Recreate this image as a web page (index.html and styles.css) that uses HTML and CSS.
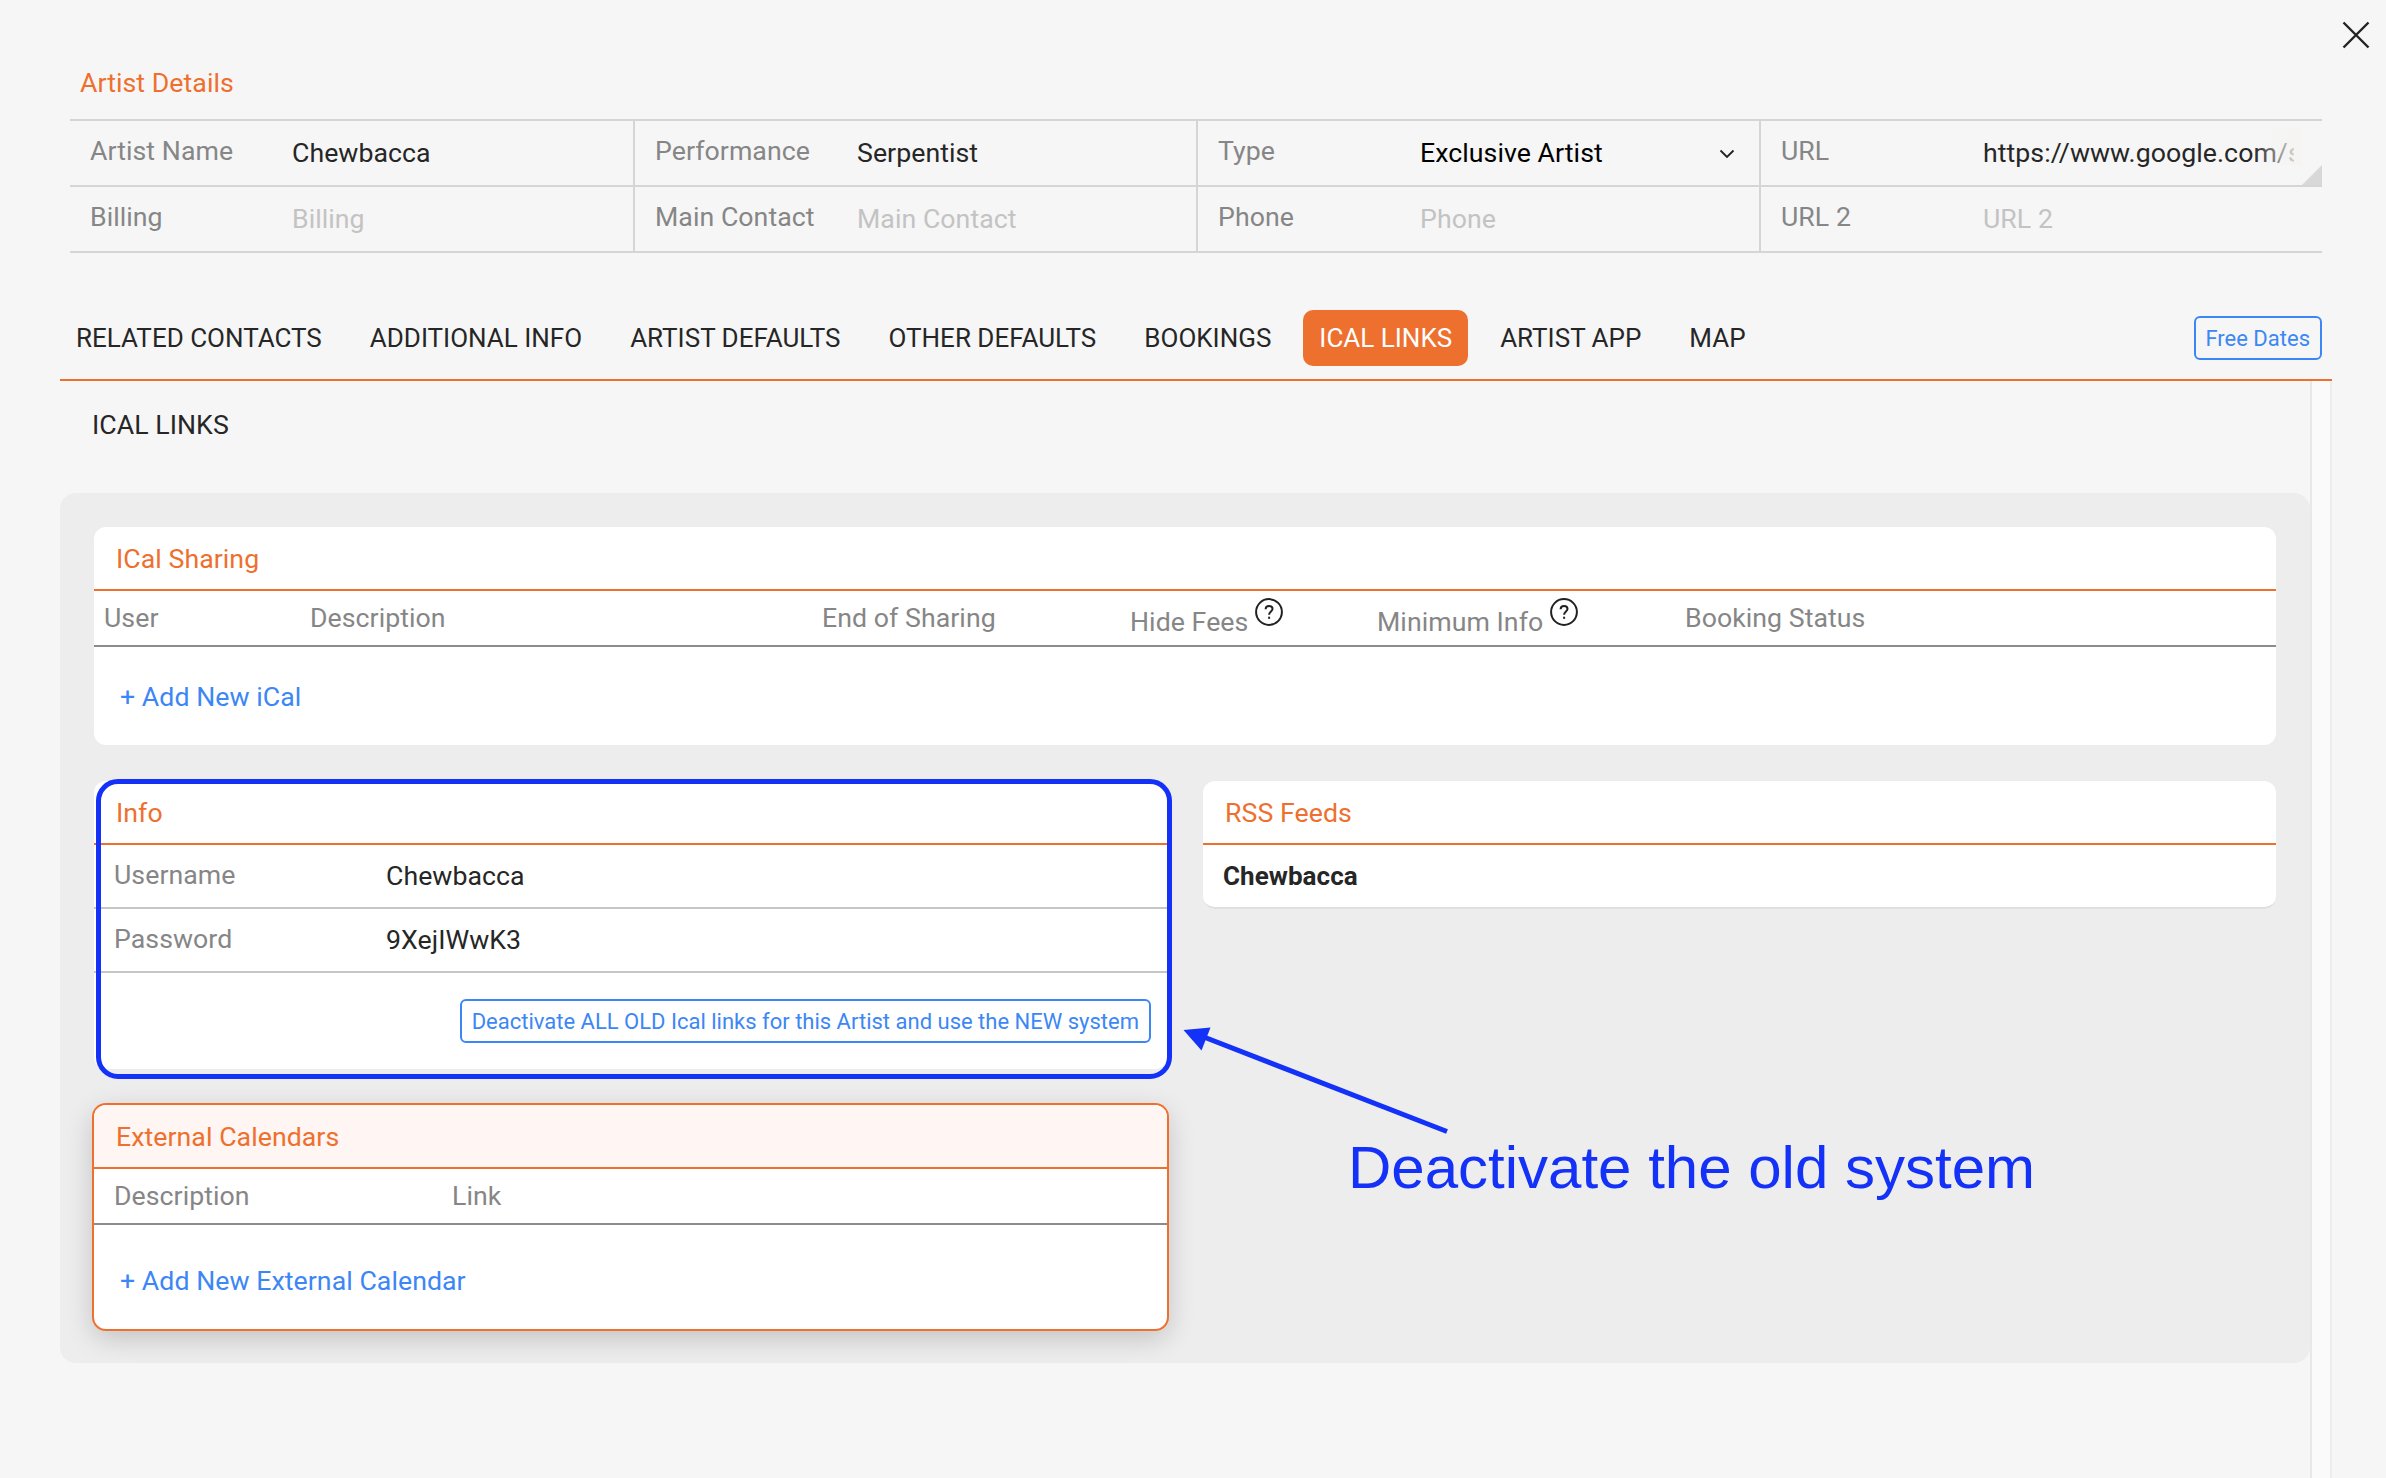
FILE: index.html
```html
<!DOCTYPE html>
<html lang="en">
<head>
    <meta charset="UTF-8">
    <meta name="viewport" content="width=device-width, initial-scale=1.0">
    <title>Artist Details</title>
    <link rel="stylesheet" href="styles.css">
</head>
<body>
    <div class="modal">
        <svg class="close" viewBox="0 0 28 28"><path d="M1.5 1.5 L26.5 26.5 M26.5 1.5 L1.5 26.5"/></svg>

        <h1 class="page-title">Artist Details</h1>
        <div class="details">
            <div class="field"><label>Artist Name</label><span class="value">Chewbacca</span></div>
            <div class="field"><label>Performance</label><span class="value">Serpentist</span></div>
            <div class="field">
                <label>Type</label><span class="value select">Exclusive Artist</span>
                <svg class="chevron" viewBox="0 0 16 10"><path d="M1.5 1.5 L8 8 L14.5 1.5"/></svg>
            </div>
            <div class="field url-field"><label>URL</label><span class="value url">https://www.google.com/s</span><span class="fade"></span></div>
            <div class="field"><label>Billing</label><span class="value placeholder">Billing</span></div>
            <div class="field"><label>Main Contact</label><span class="value placeholder">Main Contact</span></div>
            <div class="field"><label>Phone</label><span class="value placeholder">Phone</span></div>
            <div class="field"><label>URL 2</label><span class="value placeholder">URL 2</span></div>
        </div>

        <div class="tabs">
            <a class="tab">RELATED CONTACTS</a>
            <a class="tab">ADDITIONAL INFO</a>
            <a class="tab">ARTIST DEFAULTS</a>
            <a class="tab">OTHER DEFAULTS</a>
            <a class="tab">BOOKINGS</a>
            <a class="tab active">ICAL LINKS</a>
            <a class="tab">ARTIST APP</a>
            <a class="tab">MAP</a>
            <button class="btn free-dates">Free Dates</button>
        </div>

        <div class="content">
            <div class="content-main">
                <h2 class="section-title">ICAL LINKS</h2>
                <div class="panel">
                    <div class="card">
                        <div class="card-title">ICal Sharing</div>
                        <div class="thead sharing-head">
                            <span>User</span>
                            <span>Description</span>
                            <span>End of Sharing</span>
                            <span class="with-help">Hide Fees
                                <svg class="help" viewBox="0 0 28 28"><circle cx="14" cy="14" r="12.9"/><path d="M10.6 11.3 C10.6 9 12 7.9 14.1 7.9 C16.2 7.9 17.5 9.1 17.5 10.9 C17.5 13.3 14.1 13.7 14.1 16.7"/><path d="M14.1 18.7 V20.8"/></svg>
                            </span>
                            <span class="with-help">Minimum Info
                                <svg class="help" viewBox="0 0 28 28"><circle cx="14" cy="14" r="12.9"/><path d="M10.6 11.3 C10.6 9 12 7.9 14.1 7.9 C16.2 7.9 17.5 9.1 17.5 10.9 C17.5 13.3 14.1 13.7 14.1 16.7"/><path d="M14.1 18.7 V20.8"/></svg>
                            </span>
                            <span>Booking Status</span>
                        </div>
                        <a class="add-link">+ Add New iCal</a>
                    </div>

                    <div class="columns">
                        <div class="column">
                            <div class="card info-card">
                                <div class="card-title">Info</div>
                                <div class="row"><label>Username</label><span>Chewbacca</span></div>
                                <div class="row"><label>Password</label><span>9XejIWwK3</span></div>
                                <div class="actions">
                                    <button class="btn">Deactivate ALL OLD Ical links for this Artist and use the NEW system</button>
                                </div>
                                <div class="highlight"></div>
                            </div>
                            <div class="card selected">
                                <div class="card-title">External Calendars</div>
                                <div class="thead external-head">
                                    <span>Description</span>
                                    <span>Link</span>
                                </div>
                                <a class="add-link add-external">+ Add New External Calendar</a>
                            </div>
                        </div>
                        <div class="column">
                            <div class="card rss-card">
                                <div class="card-title">RSS Feeds</div>
                                <div class="feed">Chewbacca</div>
                            </div>
                        </div>
                    </div>

                    <!-- callout over the panel -->
                    <svg class="arrow" viewBox="0 0 280 120">
                        <path class="arrow-line" d="M20 12.5 L267 108.5"/>
                        <path class="arrow-head" d="M3.5 7 L30.5 4.5 L21.5 27.5 Z"/>
                    </svg>
                    <div class="callout">Deactivate the old system</div>
                </div>
            </div>
            <div class="scroll-track"></div>
        </div>
    </div>
</body>
</html>
```
FILE: styles.css
```css
* {
    box-sizing: border-box;
}
body, html {
    height: 100%;
    margin: 0;
    overflow: hidden;
    background-color: #f6f6f6;
    font-family: Roboto, sans-serif;
    font-size: 26.7px;
    letter-spacing: 0.05px;
    color: #262626;
}
.modal {
    position: relative;
    display: flex;
    flex-direction: column;
    height: 100%;
    padding: 63px 54px 0 60px;
}
.close {
    position: absolute;
    top: 21px;
    right: 16px;
    width: 28px;
    height: 28px;
    fill: none;
    stroke: #222;
    stroke-width: 2.4;
}
.page-title {
    margin: 0 0 16px 20px;
    font-size: 26.7px;
    font-weight: 400;
    line-height: 40px;
    color: #ee702e;
}

/* artist fields */
.details {
    display: grid;
    grid-template-columns: repeat(4, 563px);
    width: 2252px;
    margin-left: 10px;
    border-top: 2px solid #d5d5d5;
}
.field {
    position: relative;
    display: flex;
    height: 66px;
    line-height: 64px;
    padding-left: 20px;
    border-bottom: 2px solid #d5d5d5;
    white-space: nowrap;
}
.field::before {
    content: "";
    position: absolute;
    left: 0;
    top: 0;
    width: 2px;
    height: 64px;
    background-color: #d5d5d5;
}
.field:nth-child(4n+1)::before {
    display: none;
}
.field label {
    flex: none;
    width: 204px;
    padding-left: 2px;
    line-height: 60px;
    color: #868686;
}
.field:nth-child(4n+1) label {
    width: 202px;
    padding-left: 0;
}
.value.placeholder {
    color: #c3c3c3;
}
.value.select {
    color: #000;
}
.chevron {
    width: 16px;
    height: 10px;
    margin: 28px 24px 0 auto;
    fill: none;
    stroke: #222;
    stroke-width: 1.8;
}
.value.url {
    width: 311px;
    overflow: hidden;
}
.fade {
    position: absolute;
    top: 7px;
    right: 20px;
    width: 48px;
    height: 37px;
    background: linear-gradient(to right, rgba(245, 244, 243, 0), #f5f4f3);
}
.url-field::after {
    content: "";
    position: absolute;
    right: 0;
    bottom: 0;
    border-left: 20px solid transparent;
    border-bottom: 20px solid #d8d8d8;
}

/* tabs */
.tabs {
    display: flex;
    align-items: center;
    gap: 16px;
    height: 84px;
    margin-top: 44px;
    padding-right: 10px;
    border-bottom: 2px solid #ee702e;
    letter-spacing: 0;
}
.tab {
    height: 56px;
    padding: 0 16px;
    border-radius: 10px;
    font-size: 26px;
    line-height: 56px;
    white-space: nowrap;
}
.tab.active {
    background-color: #ee702e;
    color: #fff;
}
.btn {
    height: 44px;
    padding: 1px 10px 0;
    border: 2px solid #3c87f5;
    border-radius: 6px;
    background-color: transparent;
    font-family: inherit;
    font-size: 22px;
    line-height: 40px;
    letter-spacing: 0;
    white-space: nowrap;
    color: #3c87f5;
}
.free-dates {
    margin-left: auto;
    padding-left: 9px;
}

/* content */
.content {
    display: flex;
    flex: 1;
}
.content-main {
    width: 2250px;
}
.scroll-track {
    width: 22px;
    border-left: 2px solid #e8e8e8;
    border-right: 2px solid #ededed;
    background-color: #fafafa;
}
.section-title {
    margin: 0;
    height: 112px;
    padding-left: 32px;
    font-size: 26.7px;
    font-weight: 400;
    line-height: 88px;
}
.panel {
    position: relative;
    height: 870px;
    padding: 34px;
    border-radius: 16px;
    background-color: #ededed;
}
.card {
    position: relative;
    border-radius: 12px;
    background-color: #fff;
}
.card-title {
    height: 64px;
    padding: 2px 0 0 22px;
    border-bottom: 2px solid #ee702e;
    border-radius: 12px 12px 0 0;
    line-height: 60px;
    color: #ee702e;
}
.thead {
    display: grid;
    height: 56px;
    border-bottom: 2px solid #8c8c8c;
    line-height: 54px;
    color: #868686;
}
.sharing-head {
    grid-template-columns: 206px 512px 308px 247px 308px 1fr;
    padding-left: 10px;
}
.with-help {
    display: flex;
    padding-top: 4px;
}
.help {
    width: 28px;
    height: 28px;
    margin: 3px 0 0 7px;
    fill: none;
    stroke: #222;
    stroke-width: 2;
}
.external-head {
    grid-template-columns: 338px 1fr;
    padding-left: 20px;
}
.add-link {
    display: block;
    height: 98px;
    padding: 1px 0 0 26px;
    line-height: 98px;
    color: #3c87f5;
}
.add-external {
    height: 104px;
    padding-top: 8px;
    line-height: 96px;
}
.columns {
    display: grid;
    grid-template-columns: 1fr 1fr;
    gap: 36px;
    margin-top: 36px;
}
.column {
    display: flex;
    flex-direction: column;
    gap: 36px;
}
.info-card {
    height: 288px;
}
.row {
    display: flex;
    height: 64px;
    padding-left: 20px;
    border-bottom: 2px solid #c6c6c6;
    line-height: 62px;
}
.row label {
    width: 272px;
    line-height: 60px;
    color: #868686;
}
.actions {
    display: flex;
    justify-content: flex-end;
    padding: 26px 16px 0 0;
}
.highlight {
    position: absolute;
    top: -2px;
    left: 2px;
    width: 1076px;
    height: 300px;
    border: 5px solid #1431f8;
    border-radius: 22px;
}
.selected {
    box-shadow: 0 0 0 2px #ee702e, 0 8px 28px rgba(0, 0, 0, 0.2);
}
.selected .card-title {
    background-color: #fff5f2;
}
.feed {
    height: 64px;
    padding-left: 20px;
    border-bottom: 2px solid #dfdfdf;
    border-radius: 0 0 12px 12px;
    font-size: 26px;
    font-weight: 700;
    line-height: 62px;
}
.arrow {
    position: absolute;
    left: 1120px;
    top: 530px;
    width: 280px;
    height: 120px;
}
.arrow-line {
    fill: none;
    stroke: #1431f8;
    stroke-width: 5;
}
.arrow-head {
    fill: #1431f8;
}
.callout {
    position: absolute;
    left: 1288px;
    top: 640px;
    font-family: "Liberation Sans", Arial, sans-serif;
    font-size: 60px;
    line-height: 70px;
    letter-spacing: 0;
    white-space: nowrap;
    color: #1431f8;
}
```
